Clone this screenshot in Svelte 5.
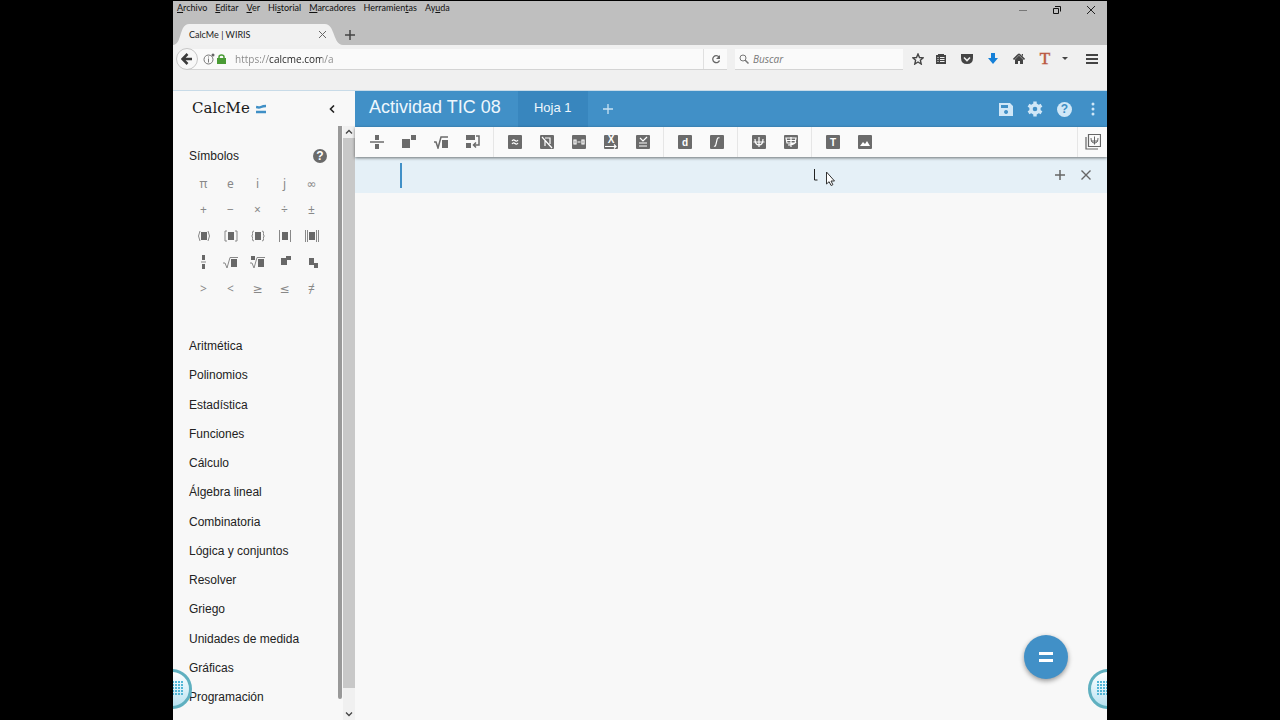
<script>
  const menus = [
    { key: 'A', rest: 'rchivo' },
    { key: 'E', rest: 'ditar' },
    { key: 'V', rest: 'er' },
    { pre: 'Hi', key: 's', rest: 'torial' },
    { key: 'M', rest: 'arcadores' },
    { pre: 'Herramien', key: 't', rest: 'as' },
    { pre: 'Ay', key: 'u', rest: 'da' }
  ];

  // box: solid square behind the glyph, fill: grey shapes, line: strokes
  const toolGroups = [
    [
      { name: 'Fracción', fill: 'M5 0h4v5H5zM5 9h4v5H5z', grey: 'M0 7h14' },
      { name: 'Potencia', fill: 'M0 4h8v9H0zM9 0h5v5H9z' },
      { name: 'Raíz', fill: 'M8 5h6v8H8z', grey: 'M0 7l2 0l2 6l3-11h7' },
      { name: 'Nueva línea', fill: 'M0 0h9v5H0zM0 8h5v5H0z', grey: 'M10 1h3v9H8M10 7.500L7.500 10L10 12.500' }
    ],
    [
      { name: 'Aproximar', box: true, line: 'M4 6q1.500-2 3-.5t3-.5M4 9q1.500-2 3-.5t3-.5' },
      { name: 'Simplificar', box: true, line: 'M2 2l10 11M5 11V5M5 3h5v6' },
      { name: 'Intervalo', box: true, line: 'M2 5h2v4H2zM5.500 7h3M10 5h2v4h-2z' },
      { name: 'Sustituir', box: true, text: 'X', y: 8, line: 'M1 11.500h11M10 9.500l2 2l-2 2' },
      { name: 'Comprobar', box: true, line: 'M4 3l3 3l4-4M3 8h8M3 11h8' }
    ],
    [
      { name: 'Derivada', box: true, text: 'd', y: 11 },
      { name: 'Integral', box: true, line: 'M9.500 3q-2-1-2.500 2l-1 4q-.5 3-2 2' }
    ],
    [
      { name: 'Gráfica', box: true, line: 'M7 2v10M1.500 7h11M3 4q0 6 4 6T11 4' },
      { name: 'Superficie', box: true, line: 'M7 2v10M2 3h10l-1 5H3zM2 5.500h10M4 10q5 0 8-3' }
    ],
    [
      { name: 'Texto', box: true, text: 'T', y: 11 },
      { name: 'Imagen', box: true, light: 'M2 11l3-4l2 2l2-3l3 5z' }
    ]
  ];

  const symbols = [
    'π', 'e', 'i', 'j', '∞',
    '+', '−', '×', '÷', '±',
    { name: 'Paréntesis', fill: 'M5 4h6v8H5z', line: 'M4 3q-3 5 0 10M12 3q3 5 0 10' },
    { name: 'Corchetes', fill: 'M5 4h6v8H5z', line: 'M4 3H2v10h2M12 3h2v10h-2' },
    { name: 'Llaves', fill: 'M5 4h6v8H5z', line: 'M4 3q-2 0-1.500 2.500T1.500 8q1.500 0 1 2.500T4 13M12 3q2 0 1.500 2.500T14.500 8q-1.500 0-1 2.500T12 13' },
    { name: 'Valor absoluto', fill: 'M5 4h6v8H5z', line: 'M2.500 2v12M13.500 2v12' },
    { name: 'Norma', fill: 'M5 4h6v8H5z', line: 'M1.500 2v12M3.500 2v12M12.500 2v12M14.500 2v12' },
    { name: 'Fracción', fill: 'M6 1h3v5H6zM6 10h3v5H6z', line: 'M5 8h5' },
    { name: 'Raíz cuadrada', fill: 'M8 5h6v8H8z', line: 'M0 9l2 0l2 5L7 3.500h8' },
    { name: 'Raíz', fill: 'M8 5h6v8H8zM1 2h4v4H1z', line: 'M0 9l2 0l2 5L7 3.500h8' },
    { name: 'Superíndice', fill: 'M4 4h6v7H4zM9 2h5v4H9z' },
    { name: 'Subíndice', fill: 'M5 4h5v7H5zM10 9h4v5h-4z' },
    '>', '<', '≥', '≤', '≠'
  ];

  const sections = [
    'Aritmética',
    'Polinomios',
    'Estadística',
    'Funciones',
    'Cálculo',
    'Álgebra lineal',
    'Combinatoria',
    'Lógica y conjuntos',
    'Resolver',
    'Griego',
    'Unidades de medida',
    'Gráficas',
    'Programación'
  ];

  let url = $state('https://calcme.com/a');
  let search = $state('');
  let expression = $state('');
</script>

{#snippet handle(side)}
  <div class="handle {side}">
    <svg width="12" height="16" viewBox="0 0 12 16">
      {#each [1, 4, 7, 10, 13] as y}
        <path d="M0 {y}h12" stroke="#52b6d6" stroke-width="2" stroke-dasharray="2 1" />
      {/each}
    </svg>
  </div>
{/snippet}

<div class="desktop">
  <div class="window">
    <div class="titlebar">
      <nav class="menus">
        {#each menus as menu}
          <button>{menu.pre ?? ''}<u>{menu.key}</u>{menu.rest}</button>
        {/each}
      </nav>
      <div class="controls">
        <button aria-label="Minimizar">
          <svg width="10" height="10"><path d="M1 5.500h8" stroke="#777" /></svg>
        </button>
        <button aria-label="Restaurar">
          <svg width="10" height="10" fill="none" stroke="#111"><path d="M1.500 3.500h5v5h-5zM3 1.500h5.500v5" /></svg>
        </button>
        <button aria-label="Cerrar">
          <svg width="10" height="10"><path d="M1 1l8 8M9 1L1 9" stroke="#222" /></svg>
        </button>
      </div>
    </div>

    <div class="tabs">
      <div class="tab">
        <svg class="shape" width="170" height="21"><path d="M0 21C9 21 6 0 16 0H152C162 0 160 21 170 21Z" fill="#f1f1f1" /></svg>
        <span>CalcMe | WIRIS</span>
        <button aria-label="Cerrar pestaña">
          <svg width="9" height="9"><path d="M1 1l7 7M8 1L1 8" stroke="#666" /></svg>
        </button>
      </div>
      <button aria-label="Nueva pestaña">
        <svg width="10" height="10"><path d="M5 0v10M0 5h10" stroke="#444" stroke-width="1.500" /></svg>
      </button>
    </div>

    <div class="navbar">
      <button class="back" aria-label="Atrás">
        <svg width="12" height="12"><path d="M11 6H2M6.500 1L1.500 6L6.500 11" fill="none" stroke="#3c3c3c" stroke-width="2.500" /></svg>
      </button>
      <div class="address">
        <svg width="12" height="12" fill="none" stroke="#777"><circle cx="5.500" cy="6.500" r="4.500" /><path d="M5.500 5.500v4M5.500 3.500v1" /><circle cx="10" cy="2" r="1.500" fill="#666" stroke="none" /></svg>
        <svg width="9" height="10"><path d="M0 4h9v6H0z" fill="#4a9b35" /><path d="M2 5V3q0-2 2.500-2T7 3v2" fill="none" stroke="#4a9b35" stroke-width="1.500" /></svg>
        <input class="url" aria-label="Dirección" bind:value={url} />
        <button class="reload" aria-label="Recargar">
          <svg width="10" height="10"><path d="M8 3A3.500 3.500 0 1 0 8.500 6.500" fill="none" stroke="#666" stroke-width="1.300" /><path d="M9 1v4H5z" fill="#666" /></svg>
        </button>
      </div>
      <div class="search">
        <svg width="10" height="10" fill="none" stroke="#777"><circle cx="4" cy="4" r="3" /><path d="M6 6l3.500 3.500" stroke-width="1.500" /></svg>
        <input aria-label="Buscar" placeholder="Buscar" bind:value={search} />
      </div>
      <div class="browser-tools">
        <button aria-label="Marcar página">
          <svg width="12" height="12"><path d="M6 1l1.500 3.500l3.700.3l-2.800 2.500l.8 3.700L6 9l-3.200 2l.8-3.700L.8 4.800l3.700-.3z" fill="none" stroke="#444" stroke-width="1.400" /></svg>
        </button>
        <button aria-label="Marcadores">
          <svg width="12" height="12"><path d="M1 2h2V1h6v1h2v9H1z" fill="#444" /><path d="M2.500 4.500h1M5 4.500h4.500M2.500 6.500h1M5 6.500h4.500M2.500 8.500h1M5 8.500h4.500" stroke="#eee" /></svg>
        </button>
        <button aria-label="Pocket">
          <svg width="12" height="12"><path d="M0 1h12v4q0 6-6 6T0 5z" fill="#444" /><path d="M3 4.500l3 3l3-3" fill="none" stroke="#eee" stroke-width="1.600" /></svg>
        </button>
        <button aria-label="Descargas">
          <svg width="12" height="12"><path d="M4 0h4v5h3L6 11L1 5h3z" fill="#1580d8" /></svg>
        </button>
        <button aria-label="Inicio">
          <svg width="12" height="12"><path d="M6 1l5.500 5.500M6 1L.5 6.500" stroke="#444" stroke-width="1.600" /><path d="M2 6.500l4-4l4 4V11H7V8H5v3H2zM8.500 1H10v3z" fill="#444" /></svg>
        </button>
        <button class="translate">T</button>
        <button class="caret" aria-label="Opciones">
          <svg width="6" height="4"><path d="M0 0h6L3 3z" fill="#444" /></svg>
        </button>
        <button class="burger" aria-label="Menú">
          <svg width="12" height="10"><path d="M0 1h12M0 5h12M0 9h12" stroke="#444" stroke-width="2" /></svg>
        </button>
      </div>
    </div>

    <div class="app">
      <aside>
        <div class="brand">
          <span class="logo">CalcMe</span>
          <svg width="10" height="10"><path d="M0 3q3 1 5 0t5-1M0 8h10" fill="none" stroke="#3f8fc6" stroke-width="2.400" /></svg>
          <button aria-label="Contraer">
            <svg width="6" height="8"><path d="M5 0.500L1.500 4L5 7.500" fill="none" stroke="#222" stroke-width="1.600" /></svg>
          </button>
        </div>
        <div class="side-body">
          <div class="palette">
            <div class="palette-title">
              <h2>Símbolos</h2>
              <button class="help">?</button>
            </div>
            <div class="symbols">
              {#each symbols as symbol}
                {#if symbol.name}
                  <button aria-label={symbol.name}>
                    <svg width="16" height="16">
                      <path d={symbol.fill} fill="#686868" />
                      <path d={symbol.line} fill="none" stroke="#888" />
                    </svg>
                  </button>
                {:else}
                  <button>{symbol}</button>
                {/if}
              {/each}
            </div>
            <ul>
              {#each sections as section}
                <li><button>{section}</button></li>
              {/each}
            </ul>
          </div>
          <div class="rail"></div>
          <div class="scrollbar">
            <svg width="12" height="12"><path d="M3 7.500L6 4.500L9 7.500" fill="none" stroke="#444" stroke-width="1.300" /></svg>
            <div class="thumb"></div>
            <svg width="12" height="12"><path d="M3 4.500L6 7.500L9 4.500" fill="none" stroke="#444" stroke-width="1.300" /></svg>
          </div>
        </div>
      </aside>

      <main>
        <header>
          <h1>Actividad TIC 08</h1>
          <button class="sheet">Hoja 1</button>
          <button class="add" aria-label="Añadir hoja">
            <svg width="12" height="12"><path d="M6 1v10M1 6h10" stroke="#c9e2f3" stroke-width="1.300" /></svg>
          </button>
          <div class="actions">
            <button aria-label="Guardar">
              <svg width="14" height="14"><path d="M0 1h11l3 3v10H0zM2 3v3h7V3zM7 8a2 2 0 1 0 .1 0z" fill="#d0e7f7" fill-rule="evenodd" /></svg>
            </button>
            <button aria-label="Ajustes">
              <svg width="16" height="16" fill="none" stroke="#d0e7f7"><circle cx="8" cy="8" r="4" stroke-width="3.400" /><path d="M8 .5v3M8 12.500v3M1.500 4.200l2.600 1.600M11.900 10.200l2.600 1.600M1.500 11.800l2.600-1.600M11.900 5.800l2.600-1.600" stroke-width="3.400" /></svg>
            </button>
            <button class="help light">?</button>
            <button class="more" aria-label="Más">
              <svg width="4" height="14" fill="#d0e7f7"><circle cx="2" cy="2" r="1.500" /><circle cx="2" cy="7" r="1.500" /><circle cx="2" cy="12" r="1.500" /></svg>
            </button>
          </div>
        </header>

        <div class="toolbar">
          {#each toolGroups as group}
            <div class="group">
              {#each group as tool}
                <button aria-label={tool.name}>
                  <svg width="14" height="14">
                    {#if tool.box}<rect width="14" height="14" rx="1" fill="#6b6b6b" />{/if}
                    <path d={tool.fill} fill="#6b6b6b" />
                    <path d={tool.grey} fill="none" stroke="#6b6b6b" stroke-width="1.500" />
                    <path d={tool.light} fill="#fff" />
                    <path d={tool.line} fill="none" stroke="#fff" stroke-width="1.200" />
                    {#if tool.text}<text x="7" y={tool.y}>{tool.text}</text>{/if}
                  </svg>
                </button>
              {/each}
            </div>
          {/each}
          <button class="gallery" aria-label="Gráficas">
            <svg width="16" height="16" fill="none" stroke="#666"><path d="M3.500.5h12v12h-12zM1 3v12h12" stroke-width="1.200" /><path d="M9.500 2.500v8M6 7h7M6 4q0 5 3.500 5T13 4" /></svg>
          </button>
        </div>

        <div class="line">
          <input aria-label="Expresión" bind:value={expression} />
          <button aria-label="Añadir línea">
            <svg width="12" height="12"><path d="M6 1v10M1 6h10" stroke="#666" stroke-width="1.500" /></svg>
          </button>
          <button aria-label="Eliminar línea">
            <svg width="12" height="12"><path d="M1.500 1.500l9 9M10.500 1.500l-9 9" stroke="#666" stroke-width="1.400" /></svg>
          </button>
        </div>
      </main>
    </div>

    <button class="equals" aria-label="Calcular">
      <svg width="16" height="10"><path d="M1 1.500h14M1 8.500h14" stroke="#fff" stroke-width="3" /></svg>
    </button>
    {@render handle('left')}
    {@render handle('right')}
    <svg class="pointer" width="24" height="20">
      <path d="M1.500 1v11h3" fill="none" stroke="#222" />
      <path d="M13.500 4v12l2.600-2.300l2 3.800l1.800-.8l-1.900-3.700h3.500z" fill="#fff" stroke="#333" />
    </svg>
  </div>
</div>

<style>
  :global(body) {
    margin: 0;
    background: #000;
  }

  .desktop {
    padding: 1px 173px 0;
    min-height: 100vh;
    box-sizing: border-box;
    display: flex;
    background: #000;
    font-family: "Liberation Sans", Arial, sans-serif;
  }

  .window {
    flex: 1;
    min-width: 0;
    position: relative;
    overflow: hidden;
    display: flex;
    flex-direction: column;
    background: #f8f8f8;
  }

  button {
    display: flex;
    align-items: center;
    justify-content: center;
    padding: 0;
    border: none;
    background: none;
    font-family: inherit;
    color: inherit;
    cursor: pointer;
  }

  input {
    border: none;
    outline: none;
    padding: 0;
    min-width: 0;
    background: none;
  }

  h1, h2, ul {
    margin: 0;
    padding: 0;
    font-weight: normal;
  }

  svg {
    display: block;
    flex: none;
  }

  .titlebar {
    height: 23px;
    display: flex;
    justify-content: space-between;
    background: #bfbfbf;
    font-family: Lato, "Open Sans", sans-serif;
  }

  .menus {
    display: flex;
    gap: 8px;
    padding-left: 4px;
    height: 13px;
  }

  .menus button {
    display: block;
    font-size: 9px;
    line-height: 13px;
    color: #111;
  }

  .controls {
    display: flex;
    height: 18px;
    padding-right: 11px;
    gap: 24px;
  }

  .tabs {
    height: 21px;
    display: flex;
    gap: 2px;
    background: #bfbfbf;
    font-family: Lato, "Open Sans", sans-serif;
  }

  .tab {
    width: 138px;
    padding: 0 16px;
    position: relative;
    display: flex;
    align-items: center;
    justify-content: space-between;
    font-size: 9px;
    color: #222;
  }

  .tab span, .tab button {
    position: relative;
  }

  .shape {
    position: absolute;
    left: 0;
    top: 0;
  }

  .navbar {
    height: 28px;
    padding-bottom: 17px;
    display: flex;
    align-items: center;
    background: #f0f0f0;
    border-bottom: 1px solid #c8dbe8;
  }

  .back {
    width: 22px;
    height: 22px;
    margin: 0 -11px 0 3px;
    position: relative;
    border: 1px solid #c6c6c6;
    border-radius: 50%;
    background: #f8f8f8;
    box-sizing: border-box;
  }

  .address, .search {
    height: 20px;
    display: flex;
    align-items: center;
    background: #fafafa;
    border-bottom: 1px solid #d4d4d4;
  }

  .address {
    flex: 1;
    gap: 2px;
    padding-left: 16px;
  }

  .url {
    flex: 1;
    margin-left: 7px;
    font: 10px "Open Sans", sans-serif;
    color: transparent;
    background: linear-gradient(to right, #888 34px, #222 34px, #222 87px, #888 87px);
    -webkit-background-clip: text;
    background-clip: text;
  }

  .reload {
    width: 24px;
    height: 20px;
    border-left: 1px solid #e0e0e0;
  }

  .search {
    width: 164px;
    margin-left: 8px;
    padding-left: 4px;
    gap: 4px;
  }

  .search input {
    flex: 1;
    font: italic 10px "Open Sans", sans-serif;
  }

  .search input::placeholder {
    color: #777;
    opacity: 1;
  }

  .browser-tools {
    display: flex;
    align-items: center;
    padding: 0 9px;
    gap: 14px;
  }

  .browser-tools button:first-child {
    margin-right: -3px;
  }

  .translate {
    width: 12px;
    font: 17px/16px "Liberation Serif", serif;
    color: #b9573f;
    -webkit-text-stroke: 1px #b9573f80;
  }

  .caret {
    margin-left: -3px;
  }

  .burger {
    margin-left: 4px;
  }

  .app {
    flex: 1;
    display: flex;
  }

  aside {
    width: 182px;
    display: flex;
    flex-direction: column;
    background: #f8f8f8;
  }

  .brand {
    height: 35px;
    padding: 0 20px 0 19px;
    display: flex;
    align-items: center;
    gap: 6px;
  }

  .logo {
    font: 15px/35px "DejaVu Serif", serif;
    color: #1a1a1a;
  }

  .brand button {
    margin-left: auto;
  }

  .side-body {
    flex: 1;
    display: flex;
  }

  .palette {
    flex: 1;
    padding: 21px 12px 8px 16px;
    display: flex;
    flex-direction: column;
  }

  .palette-title {
    height: 18px;
    padding-right: 10px;
    margin-right: -11px;
    display: flex;
    align-items: center;
    justify-content: space-between;
  }

  h2 {
    font-size: 12px;
    color: #222;
  }

  .help {
    width: 14px;
    height: 14px;
    border-radius: 50%;
    background: #6a6a6a;
    color: #fff;
    font-size: 12px;
    font-weight: bold;
    line-height: 14px;
  }

  .light {
    background: #d0e7f7;
    color: #3f8fc6;
  }

  .symbols {
    height: 132px;
    margin: 5px 0 30px 1px;
    display: grid;
    grid-template-columns: repeat(5, 27px);
    grid-template-rows: repeat(5, 1fr);
  }

  .symbols button {
    font: 12px "Noto Sans", "DejaVu Sans", sans-serif;
    color: #888;
  }

  ul {
    flex: 1;
    display: flex;
    flex-direction: column;
    justify-content: space-between;
    list-style: none;
  }

  li button {
    font-size: 12px;
    line-height: 29px;
    color: #222;
    white-space: nowrap;
  }

  .rail {
    width: 4px;
    margin: 0 1px 21px 0;
    border-radius: 0 0 2px 2px;
    background: #999;
  }

  .scrollbar {
    width: 12px;
    display: flex;
    flex-direction: column;
    background: #f0f0f0;
  }

  .thumb {
    flex: 1;
    margin-bottom: 20px;
    background: #c8c8c8;
  }

  main {
    flex: 1;
    min-width: 0;
    display: flex;
    flex-direction: column;
    background: #f8f8f8;
  }

  header {
    height: 36px;
    padding-left: 14px;
    display: flex;
    align-items: center;
    background: #4190c7;
    color: #eef7fd;
  }

  h1 {
    font-size: 18px;
    line-height: 32px;
    padding-bottom: 4px;
    white-space: nowrap;
  }

  .sheet {
    width: 70px;
    height: 36px;
    padding-bottom: 4px;
    margin-left: 17px;
    background: #3886be;
    font-size: 13px;
  }

  .add {
    margin-left: 14px;
  }

  .actions {
    margin-left: auto;
    padding-right: 7px;
    display: flex;
    align-items: center;
    gap: 14px;
  }

  .actions .help {
    width: 15px;
    height: 15px;
  }

  .more {
    width: 14px;
  }

  .toolbar {
    height: 30px;
    padding-left: 1px;
    position: relative;
    display: flex;
    background: #fafafa;
    box-shadow: 0 1px 3px #0008;
  }

  .group {
    display: flex;
    padding: 0 4px 0 5px;
    border-right: 1px solid #e6e6e6;
  }

  .group:nth-last-child(2) {
    border-right: none;
  }

  .group button {
    width: 32px;
  }

  text {
    font: bold 10px "Liberation Sans", sans-serif;
    fill: #fff;
    text-anchor: middle;
  }

  .gallery {
    width: 30px;
    margin-left: auto;
    border-left: 1px solid #e6e6e6;
  }

  .line {
    height: 36px;
    padding: 0 15px 0 45px;
    display: flex;
    align-items: center;
    gap: 14px;
    background: #e5f0f7;
  }

  .line input {
    flex: 1;
    height: 25px;
    border-left: 2px solid #4190c7;
    font-size: 16px;
  }

  .equals {
    width: 44px;
    height: 44px;
    position: absolute;
    right: 39px;
    bottom: 41px;
    border-radius: 50%;
    background: #4190c7;
    box-shadow: 0 2px 5px #0006;
  }

  .handle {
    width: 40px;
    height: 40px;
    position: absolute;
    bottom: 11px;
    display: flex;
    align-items: center;
    border: 3px solid #5fb0c0;
    border-radius: 50%;
    background: linear-gradient(#fff, #b9e3f2);
    box-sizing: border-box;
  }

  .left {
    left: -21px;
    justify-content: flex-end;
    padding-right: 5px;
  }

  .right {
    right: -21px;
    padding-left: 6px;
  }

  .pointer {
    position: absolute;
    left: 640px;
    top: 167px;
    pointer-events: none;
  }
</style>
